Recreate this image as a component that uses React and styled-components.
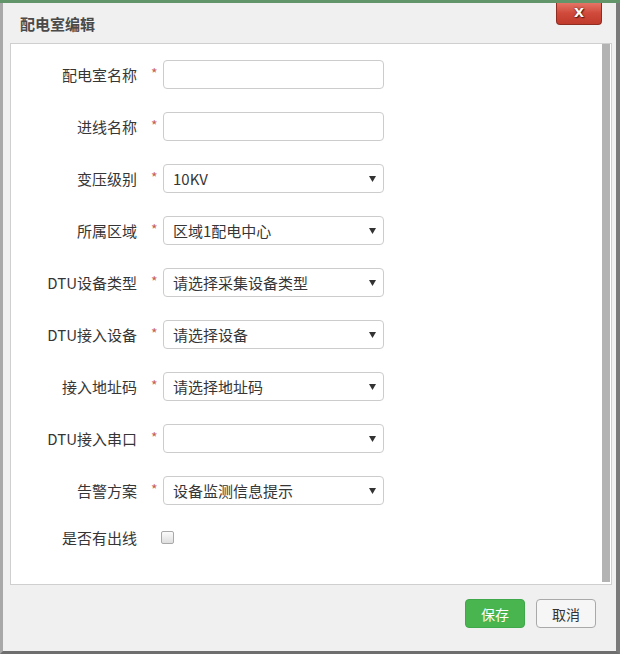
import React from 'react'
import styled, { createGlobalStyle } from 'styled-components';

const GlobalStyle = createGlobalStyle`
  body {
    margin: 0;
    background: #ffffff;
    font-family: "Noto Sans CJK SC", "Noto Sans", sans-serif;
  }
`;

const fields = [
  { label: '配电室名称', kind: 'input' },
  { label: '进线名称', kind: 'input' },
  { label: '变压级别', kind: 'select', value: '10KV' },
  { label: '所属区域', kind: 'select', value: '区域1配电中心' },
  { label: 'DTU设备类型', kind: 'select', value: '请选择采集设备类型' },
  { label: 'DTU接入设备', kind: 'select', value: '请选择设备' },
  { label: '接入地址码', kind: 'select', value: '请选择地址码' },
  { label: 'DTU接入串口', kind: 'select', value: '' },
  { label: '告警方案', kind: 'select', value: '设备监测信息提示' },
];

const Arrow = () => (
  <svg width="7" height="6" viewBox="0 0 7 6">
    <path d="M0 0 H7 L3.5 6 Z" fill="#333" />
  </svg>
);

const App = () => {
  return (
    <Screen>
      <GlobalStyle />
      <Dialog>
        <CloseButton>X</CloseButton>
        <Header>
          <Title>配电室编辑</Title>
        </Header>
        <Panel>
          <Form>
            {fields.map((f) => (
              <Row key={f.label}>
                <Label>{f.label}</Label>
                <Star>*</Star>
                {f.kind === 'input' ? (
                  <TextBox />
                ) : (
                  <SelectBox>
                    <span>{f.value}</span>
                    <Arrow />
                  </SelectBox>
                )}
              </Row>
            ))}
            <Row $tight>
              <Label>是否有出线</Label>
              <span />
              <Check />
            </Row>
          </Form>
          <Scrollbar />
        </Panel>
        <Footer>
          <Button $primary>保存</Button>
          <Button>取消</Button>
        </Footer>
      </Dialog>
    </Screen>
  )
}

const Screen = styled.div`
    width: 620px;
    height: 657px;
    box-sizing: border-box;
    border-top: 3px solid #62966a;
    background: #ffffff;
    overflow: hidden;
`;

const Dialog = styled.div`
    position: relative;
    box-sizing: border-box;
    width: 620px;
    height: 651px;
    display: flex;
    flex-direction: column;
    background: #f0f0f0;
    border-left: 3px solid #a8a8a8;
    border-right: 4px solid #7a7a7a;
    border-bottom: 3px solid #6e6e6e;
`;

const CloseButton = styled.div`
    position: absolute;
    top: -3px;
    right: 14px;
    width: 46px;
    height: 25px;
    box-sizing: border-box;
    display: flex;
    align-items: center;
    justify-content: center;
    border: 1px solid #8f2d22;
    border-top: none;
    border-radius: 0 0 4px 4px;
    background: linear-gradient(#ea8173, #d04a3b 55%, #c13b2c);
    color: #ffffff;
    font-family: "DejaVu Sans", sans-serif;
    font-weight: bold;
    font-size: 13px;
    text-shadow: 0 0 2px #5a1a12, 1px 1px 1px #5a1a12;
`;

const Header = styled.div`
    height: 40px;
    display: flex;
    align-items: center;
    padding-left: 17px;
    flex-shrink: 0;
`;

const Title = styled.h1`
    margin: 0;
    font-size: 15px;
    font-weight: bold;
    color: #4a4a4a;
`;

const Panel = styled.div`
    display: flex;
    height: 540px;
    margin: 0 4px 0 7px;
    border: 1px solid #cfcfcf;
    background: #ffffff;
    flex-shrink: 0;
`;

const Form = styled.div`
    flex: 1;
    display: flex;
    flex-direction: column;
    row-gap: 23px;
    padding-top: 16px;
`;

const Row = styled.div`
    display: grid;
    grid-template-columns: 126px 26px 221px;
    align-items: center;
    height: 29px;
    margin-top: ${(p) => (p.$tight ? '-5px' : '0')};
`;

const Label = styled.div`
    text-align: right;
    font-size: 15px;
    color: #363636;
`;

const Star = styled.div`
    padding-left: 14px;
    font-size: 14px;
    color: #c9604f;
    margin-top: -4px;
`;

const TextBox = styled.div`
    height: 29px;
    box-sizing: border-box;
    border: 1px solid #cccccc;
    border-radius: 4px;
    background: #ffffff;
`;

const SelectBox = styled.div`
    height: 29px;
    box-sizing: border-box;
    display: flex;
    align-items: center;
    justify-content: space-between;
    padding: 0 7px 0 9px;
    border: 1px solid #cccccc;
    border-radius: 4px;
    background: #ffffff;
    font-size: 15px;
    color: #363636;
`;

const Check = styled.div`
    width: 11px;
    height: 11px;
    margin-left: -2px;
    border: 1px solid #a9a9a9;
    border-radius: 2px;
    background: linear-gradient(#fbfbfb, #dedede);
`;

const Scrollbar = styled.div`
    width: 8px;
    margin: 0 1px 2px 0;
    background: #b3b3b3;
`;

const Footer = styled.div`
    flex: 1;
    display: flex;
    justify-content: flex-end;
    align-items: flex-start;
    column-gap: 11px;
    padding: 14px 20px 0 0;
`;

const Button = styled.div`
    width: 60px;
    height: 29px;
    box-sizing: border-box;
    display: flex;
    align-items: center;
    justify-content: center;
    border-radius: 4px;
    font-size: 14px;
    border: 1px solid ${(p) => (p.$primary ? '#3fa84a' : '#a9a9a9')};
    background: ${(p) => (p.$primary ? '#48b54f' : '#f6f6f6')};
    color: ${(p) => (p.$primary ? '#ffffff' : '#333333')};
`;

export default App
